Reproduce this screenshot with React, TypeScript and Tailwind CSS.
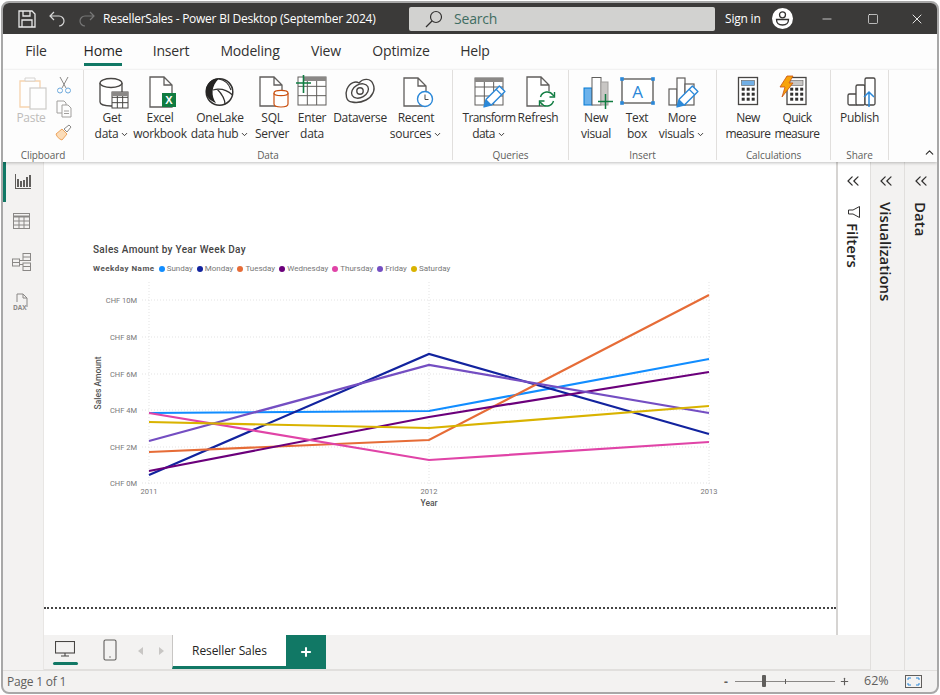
import type { ReactNode } from "react";
import { ChevronDown, ChevronUp, ChevronsLeft, Minus, Square, X, Plus } from "lucide-react";

const Doc = ({ x = 10, y = 1, w = 22, h = 30 }: { x?: number; y?: number; w?: number; h?: number }) => (
  <path d={`M${x} ${y}h${w - 8}l8 8v${h - 8}h-${w}z M${x + w - 8} ${y}v8h8`} fill="#fff" stroke="#605e5c" strokeWidth="1.3" />
);

const Grid = ({ x, y, w, h, cols = 3, rows = 3, stroke = "#605e5c" }: { x: number; y: number; w: number; h: number; cols?: number; rows?: number; stroke?: string }) => (
  <g stroke={stroke} strokeWidth="1" fill="#fff">
    <rect x={x} y={y} width={w} height={h} />
    {Array.from({ length: cols - 1 }).map((_, i) => (
      <path key={i} d={`M${x + ((i + 1) * w) / cols} ${y}v${h}`} />
    ))}
    {Array.from({ length: rows - 1 }).map((_, i) => (
      <path key={i} d={`M${x} ${y + ((i + 1) * h) / rows}h${w}`} />
    ))}
  </g>
);

const Pencil = ({ x, y }: { x: number; y: number }) => (
  <g transform={`translate(${x} ${y}) scale(1.1)`}>
    <path d="M0 19l2-7L14 0l5 5L7 17z" fill="#fff" stroke="#2b88d8" strokeWidth="1.3" strokeLinejoin="round" />
    <path d="M0 19l2-7 5 5z" fill="#2b88d8" />
    <path d="M11 3l5 5" stroke="#2b88d8" strokeWidth="1.1" />
  </g>
);

const Calc = ({ x, display }: { x: number; display: string }) => (
  <g>
    <rect x={x} y="1.5" width="19" height="27" fill="#fff" stroke="#484644" strokeWidth="1.3" />
    <rect x={x + 3} y="4.5" width="13" height="5" fill={display} stroke="#605e5c" strokeWidth="0.6" />
    {[13, 18, 23].map((cy) =>
      [4.5, 9.5, 14.5].map((dx) => <rect key={`${cy}-${dx}`} x={x + dx - 1.3} y={cy - 1.3} width="3" height="3" fill="#323130" />),
    )}
  </g>
);

const icons: Record<string, ReactNode> = {
  getData: (
    <>
      <path d="M10 7v19c0 2.5 5 4 11 4s11-1.500 11-4V7" fill="#fff" stroke="#484644" strokeWidth="1.3" />
      <ellipse cx="21" cy="7" rx="11" ry="4.500" fill="#fff" stroke="#484644" strokeWidth="1.3" />
      <Grid x={22} y={16} w={16} h={16} stroke="#484644" />
      <rect x="22" y="16" width="16" height="4" fill="#8a8886" />
    </>
  ),
  excel: (
    <>
      <Doc x={12} y={1} w={22} h={30} />
      <rect x="24" y="17" width="14" height="14" fill="#107c41" />
      <text x="31" y="28" textAnchor="middle" fontSize="11" fontWeight="700" fill="#fff" fontFamily="Liberation Sans">X</text>
    </>
  ),
  onelake: (
    <>
      <circle cx="21.500" cy="16" r="13.300" fill="#fff" stroke="#323130" strokeWidth="1.500" />
      <path d="M21 2.500C12 2 7 10 8 17c1 5 5 8 10 10-5-7-5-17 3-24.500z" fill="#252423" />
      <path d="M15 14c7-2 14 0 19.500 5M19 13c5 5 8 11 8 15.500M21 3c6 1 10 5 12 11" fill="none" stroke="#323130" strokeWidth="1.200" />
    </>
  ),
  sql: (
    <>
      <Doc x={10} y={1} w={22} h={29} />
      <path d="M24 17v11c0 2 3 3 7 3s7-1 7-3V17" fill="#fff" stroke="#ca5010" strokeWidth="1.2" />
      <ellipse cx="31" cy="17" rx="7" ry="2.700" fill="#fff" stroke="#ca5010" strokeWidth="1.2" />
    </>
  ),
  enter: (
    <>
      <Grid x={8} y={1} w={28} h={28} stroke="#605e5c" />
      <rect x="14" y="1" width="22" height="4" fill="#8a8886" />
      <path d="M6 7h15M13.500 -1v18" stroke="#107c41" strokeWidth="1.600" />
    </>
  ),
  dataverse: (
    <g fill="none" stroke="#484644" strokeWidth="1.400">
      <path d="M14 26C8 26 7 18 9 13c3-7 9-8 12-6 4-5 12-5 14 1 3 6-1 13-7 16-6 3-10 3-14 2z" />
      <ellipse cx="22" cy="15" rx="9" ry="6.500" transform="rotate(-30 22 15)" />
      <circle cx="22" cy="15" r="3.200" />
    </g>
  ),
  recent: (
    <>
      <Doc x={10} y={2} w={22} h={28} />
      <circle cx="31" cy="23" r="7.500" fill="#fff" stroke="#2b88d8" strokeWidth="1.400" />
      <path d="M31 18.500V23.500h3.500" fill="none" stroke="#484644" strokeWidth="1" />
    </>
  ),
  transform: (
    <>
      <Grid x={8} y={2} w={28} h={27} />
      <rect x="8" y="2" width="28" height="4" fill="#8a8886" />
      <Pencil x={17} y={10} />
    </>
  ),
  refresh: (
    <>
      <Doc x={11} y={1} w={22} h={29} />
      <circle cx="31" cy="23" r="8" fill="#fff" />
      <path d="M24.500 21a7 7 0 0 1 12.500-2l0.800 1M37.500 25a7 7 0 0 1-12.500 2l-0.800-1" fill="none" stroke="#107c41" strokeWidth="1.400" />
      <path d="M38.500 16v5h-5M23.500 30v-5h5" fill="none" stroke="#107c41" strokeWidth="1.400" />
    </>
  ),
  newVisual: (
    <>
      <rect x="10" y="12" width="8" height="17" fill="#6cb2eb" stroke="#0078d4" />
      <rect x="18" y="1.500" width="9" height="27.500" fill="#fff" stroke="#605e5c" />
      <rect x="27" y="6" width="7" height="23" fill="#c8c6c4" stroke="#a19f9d" />
      <path d="M24 25.500h15M31.500 18v15" stroke="#107c41" strokeWidth="1.500" />
    </>
  ),
  textbox: (
    <>
      <rect x="7" y="3" width="31" height="24" fill="#fff" stroke="#484644" strokeWidth="1.200" />
      {[
        [7, 3],
        [38, 3],
        [7, 27],
        [38, 27],
      ].map(([cx, cy]) => (
        <rect key={`${cx}-${cy}`} x={cx - 1.800} y={cy - 1.800} width="3.600" height="3.600" fill="#2b88d8" />
      ))}
      <text x="22.500" y="22" textAnchor="middle" fontSize="17" fill="#2b88d8" fontFamily="Open Sans">A</text>
    </>
  ),
  moreVisuals: (
    <>
      <rect x="9" y="13" width="8" height="16" fill="#fff" stroke="#605e5c" strokeWidth="1.200" />
      <rect x="17" y="2" width="8" height="27" fill="#fff" stroke="#605e5c" strokeWidth="1.200" />
      <rect x="25" y="8" width="9" height="21" fill="#fff" stroke="#605e5c" strokeWidth="1.200" />
      <Pencil x={17} y={10} />
    </>
  ),
  newMeasure: <Calc x={12.500} display="#71afe5" />,
  quickMeasure: (
    <>
      <Calc x={12} display="#c8c6c4" />
      <path d="M12 0h6l-4 7h4L7 21l3-10H5z" fill="#f7a30c" stroke="#ca5010" strokeWidth="0.800" />
    </>
  ),
  publish: (
    <g fill="none" stroke="#484644" strokeWidth="1.300">
      <rect x="10" y="18" width="10" height="11" rx="1.500" fill="#fff" />
      <rect x="18" y="9" width="9" height="20" rx="1.500" fill="#fff" />
      <rect x="27" y="2" width="10" height="27" rx="1.500" fill="#fff" />
      <path d="M31 31V16M26 21l5-5 5 5" stroke="#2b88d8" strokeWidth="1.500" />
    </g>
  ),
};

const RibbonItem = ({ icon, lines, caret, width, tight }: { icon: string; lines: string[]; caret?: boolean; width: string; tight?: boolean }) => (
  <div className={`flex shrink-0 flex-col items-center ${width}`}>
    <svg width="44" height="34" viewBox="0 0 44 34" className="overflow-visible">
      {icons[icon]}
    </svg>
    <div className={`flex flex-col items-center whitespace-nowrap text-[12px] leading-[16px] text-[#323130] ${tight ? "tracking-[-0.6px]" : "tracking-[-0.3px]"}`}>
      {lines.map((l, i) => (
        <span key={l} className="flex items-center">
          {l}
          {caret && i === lines.length - 1 && <ChevronDown size={9} strokeWidth={2.500} className="ml-[2px]" />}
        </span>
      ))}
    </div>
  </div>
);

const RibbonGroup = ({ label, width, pad, children }: { label: string; width: string; pad: string; children: ReactNode }) => (
  <div className={`flex h-[90px] shrink-0 flex-col border-r border-[#e1dfdd] ${width}`}>
    <div className={`flex h-[78px] shrink-0 pt-[6px] ${pad}`}>{children}</div>
    <div className="text-center text-[10px] leading-[14px] tracking-[-0.1px] text-[#605e5c]">{label}</div>
  </div>
);

const tabs = [
  { name: "File", width: "w-[44px]" },
  { name: "Home", width: "w-[90px]", active: true },
  { name: "Insert", width: "w-[46px]" },
  { name: "Modeling", width: "w-[112px]" },
  { name: "View", width: "w-[40px]" },
  { name: "Optimize", width: "w-[110px]" },
  { name: "Help", width: "w-[38px]" },
];

const legend = [
  { name: "Sunday", dot: "bg-[#118dff]" },
  { name: "Monday", dot: "bg-[#12239e]" },
  { name: "Tuesday", dot: "bg-[#e66c37]" },
  { name: "Wednesday", dot: "bg-[#6b007b]" },
  { name: "Thursday", dot: "bg-[#e044a7]" },
  { name: "Friday", dot: "bg-[#744ec2]" },
  { name: "Saturday", dot: "bg-[#d9b300]" },
];

const series = [
  { color: "#118dff", y: [413, 411, 359] },
  { color: "#12239e", y: [475, 354, 434] },
  { color: "#e66c37", y: [452, 440, 295] },
  { color: "#6b007b", y: [471, 417, 372] },
  { color: "#e044a7", y: [413, 460, 442] },
  { color: "#744ec2", y: [441, 365, 413] },
  { color: "#d9b300", y: [422, 428, 406] },
];

const yTicks = [
  { label: "CHF 10M", y: 300 },
  { label: "CHF 8M", y: 337 },
  { label: "CHF 6M", y: 374 },
  { label: "CHF 4M", y: 410 },
  { label: "CHF 2M", y: 447 },
  { label: "CHF 0M", y: 483 },
];

const Chart = () => (
  <svg width="640" height="232" viewBox="90 278 640 232" className="block" fontFamily="Roboto, sans-serif">
    {yTicks.map((t) => (
      <g key={t.label}>
        <path d={`M142 ${t.y}H710`} stroke="#e3e3e3" strokeWidth="1" strokeDasharray="1 2" />
        <text x="137" y={t.y + 2.500} textAnchor="end" fontSize="7.500" fill="#777">{t.label}</text>
      </g>
    ))}
    {[149, 429, 709].map((x, i) => (
      <g key={x}>
        <path d={`M${x} 282V484`} stroke="#e3e3e3" strokeWidth="1" strokeDasharray="1 2" />
        <text x={x} y="494" textAnchor="middle" fontSize="7.500" fill="#777">{2011 + i}</text>
      </g>
    ))}
    <text x="0" y="0" transform="translate(101 383) rotate(-90)" textAnchor="middle" fontSize="8.500" fontWeight="500" fill="#555">Sales Amount</text>
    <text x="429" y="506" textAnchor="middle" fontSize="8.500" fontWeight="500" fill="#555">Year</text>
    {series.map((s) => (
      <polyline key={s.color} points={`149,${s.y[0]} 429,${s.y[1]} 709,${s.y[2]}`} fill="none" stroke={s.color} strokeWidth="2.200" />
    ))}
  </svg>
);

const SidePane = ({ label, width, bg, children }: { label: string; width: string; bg: string; children?: ReactNode }) => (
  <div className={`flex shrink-0 flex-col items-center pt-[9px] ${width} ${bg}`}>
    <ChevronsLeft size={20} strokeWidth={1.500} className="text-[#323130]" />
    {children}
    <span className="mt-[11px] text-[15px] font-semibold leading-[18px] text-[#252423] [writing-mode:vertical-rl]">{label}</span>
  </div>
);

export default function App() {
  return (
    <div className="h-[695px] w-[940px] bg-white pl-px pt-px font-['Open_Sans','Noto_Sans',sans-serif]">
      <div className="flex h-[693px] w-[938px] flex-col overflow-hidden rounded-lg border-2 border-[#a8a8a8] bg-[#f3f2f1]">
        {/* title bar */}
        <div className="flex h-[31px] shrink-0 items-center bg-[#3b3a39] text-white">
          <svg width="18" height="18" viewBox="0 0 18 18" fill="none" stroke="#e8e8e8" strokeWidth="1.300" className="ml-[15px]">
            <path d="M1 1h13l3 3v13H1z" />
            <path d="M5 1v5h7V1M4 17v-7h10v7" />
          </svg>
          <svg width="16" height="16" viewBox="0 0 16 16" fill="none" stroke="#d8d8d8" strokeWidth="1.200" className="ml-[13px]">
            <path d="M5 1L1 5l4 4M1 5h9a5 5 0 0 1 0 10" />
          </svg>
          <svg width="16" height="16" viewBox="0 0 16 16" fill="none" stroke="#777" strokeWidth="1.200" className="ml-[14px]">
            <path d="M11 1l4 4-4 4M15 5H6a5 5 0 0 0 0 10" />
          </svg>
          <span className="ml-[8px] w-[306px] whitespace-nowrap text-[12px] tracking-[-0.25px]">ResellerSales - Power BI Desktop (September 2024)</span>
          <div className="flex h-[24px] w-[306px] items-center rounded-[2px] bg-[#d2d2d0] pl-[16px]">
            <svg width="18" height="18" viewBox="0 0 18 18" fill="none" stroke="#323130" strokeWidth="1.200">
              <circle cx="11" cy="7" r="5.500" />
              <path d="M7 11l-6 6" />
            </svg>
            <span className="ml-[11px] text-[14px] tracking-[-0.2px] text-[#3f6d62]">Search</span>
          </div>
          <span className="ml-[10px] w-[37px] whitespace-nowrap text-[12px] tracking-[-0.2px]">Sign in</span>
          <svg width="21" height="21" viewBox="0 0 21 21" className="ml-[10px]">
            <circle cx="10.500" cy="10.500" r="10.500" fill="#fff" />
            <circle cx="10.500" cy="6.800" r="3" fill="none" stroke="#323130" strokeWidth="1.300" />
            <path d="M4.500 11.500h12c0 4-3 5.500-6 5.500s-6-1.500-6-5.500z" fill="none" stroke="#323130" strokeWidth="1.300" />
          </svg>
          <Minus size={14} strokeWidth={1.200} className="ml-[27px]" />
          <Square size={12} strokeWidth={1.300} className="ml-[33px]" />
          <X size={16} strokeWidth={1.300} className="ml-[30px]" />
        </div>

        {/* ribbon tabs */}
        <div className="flex h-[36px] shrink-0 bg-[#fdfdfd] pl-[11px]">
          {tabs.map((t) => (
            <div key={t.name} className={`flex shrink-0 justify-center ${t.width}`}>
              <span className={`h-[32px] pt-[7px] text-[14px] leading-[20px] tracking-[-0.2px] ${t.active ? "border-b-[3px] border-[#117865] font-medium text-[#252423]" : "text-[#323130]"}`}>{t.name}</span>
            </div>
          ))}
        </div>

        {/* ribbon */}
        <div className="relative z-10 flex h-[92px] shrink-0 bg-[#fdfdfd] shadow-[0_1px_3px_rgba(0,0,0,0.25)]">
          <RibbonGroup label="Clipboard" width="w-[81px]" pad="pl-[6px]">
            <div className="flex w-[44px] shrink-0 flex-col items-center opacity-90">
              <svg width="44" height="34" viewBox="0 0 44 34">
                <path d="M11 5h20v26H11z" fill="#fff" stroke="#f6cfa6" strokeWidth="1.300" />
                <path d="M16 5V2h10v3z" fill="#fff" stroke="#d0cecc" strokeWidth="1" />
                <rect x="21" y="12" width="16" height="21" fill="#fff" stroke="#c8c6c4" strokeWidth="1.200" />
              </svg>
              <span className="text-[12px] leading-[16px] tracking-[-0.3px] text-[#b8b6b4]">Paste</span>
            </div>
            <div className="ml-[2px] flex flex-col items-center gap-[6px]">
              <svg width="16" height="18" viewBox="0 0 16 18" fill="none" stroke="#8a8886" strokeWidth="1">
                <path d="M4 1l6 11M12 1L6 12" />
                <circle cx="4" cy="14.500" r="2.500" stroke="#6ca9dc" />
                <circle cx="12" cy="14.500" r="2.500" stroke="#6ca9dc" />
              </svg>
              <svg width="16" height="18" viewBox="0 0 16 18" fill="none" stroke="#a19f9d" strokeWidth="1">
                <path d="M1 1h7l2 2v10H1z" />
                <path d="M6 5h6l3 3v9H6z" fill="#fdfdfd" />
                <path d="M8 11h5M8 13.500h5" />
              </svg>
              <svg width="17" height="17" viewBox="0 0 17 17" fill="none" strokeWidth="1">
                <path d="M1 10l6-5 5 5-5 6c-3-1-5-3-6-6z" fill="#fbdcb8" stroke="#eda35c" />
                <path d="M9 5l5-4 2 2-4 5z" fill="#fff" stroke="#8a8886" />
              </svg>
            </div>
          </RibbonGroup>

          <RibbonGroup label="Data" width="w-[369px]" pad="pl-[4px]">
            <RibbonItem icon="getData" lines={["Get", "data"]} caret width="w-[48px]" />
            <RibbonItem icon="excel" lines={["Excel", "workbook"]} width="w-[48px]" />
            <RibbonItem icon="onelake" lines={["OneLake", "data hub"]} caret width="w-[72px]" />
            <RibbonItem icon="sql" lines={["SQL", "Server"]} width="w-[32px]" />
            <RibbonItem icon="enter" lines={["Enter", "data"]} width="w-[48px]" />
            <RibbonItem icon="dataverse" lines={["Dataverse"]} width="w-[48px]" />
            <RibbonItem icon="recent" lines={["Recent", "sources"]} caret width="w-[64px]" />
          </RibbonGroup>

          <RibbonGroup label="Queries" width="w-[116px]" pad="pl-[8px]">
            <RibbonItem icon="transform" lines={["Transform", "data"]} caret tight width="w-[56px]" />
            <RibbonItem icon="refresh" lines={["Refresh"]} width="w-[42px]" />
          </RibbonGroup>

          <RibbonGroup label="Insert" width="w-[148px]" pad="pl-[7px]">
            <RibbonItem icon="newVisual" lines={["New", "visual"]} width="w-[40px]" />
            <RibbonItem icon="textbox" lines={["Text", "box"]} width="w-[42px]" />
            <RibbonItem icon="moreVisuals" lines={["More", "visuals"]} caret width="w-[48px]" />
          </RibbonGroup>

          <RibbonGroup label="Calculations" width="w-[114px]" pad="pl-[7px]">
            <RibbonItem icon="newMeasure" lines={["New", "measure"]} tight width="w-[48px]" />
            <RibbonItem icon="quickMeasure" lines={["Quick", "measure"]} tight width="w-[50px]" />
          </RibbonGroup>

          <RibbonGroup label="Share" width="w-[58px]" pad="pl-0">
            <RibbonItem icon="publish" lines={["Publish"]} width="w-[57px]" />
          </RibbonGroup>

          <ChevronUp size={13} strokeWidth={2.200} className="mb-[3px] ml-auto mr-[1px] self-end text-[#323130]" />
        </div>

        {/* body */}
        <div className="flex min-h-0 flex-1">
          {/* view switcher */}
          <div className="flex w-[41px] shrink-0 flex-col border-r border-[#e8e6e4]">
            <div className="flex h-[40px] items-center justify-center border-l-[3px] border-[#117865] pb-[2px] pr-[3px]">
              <svg width="16" height="15" viewBox="0 0 16 15" fill="#605e5c">
                <path d="M0 0h1v14h15v1H0z" />
                <path d="M2 5h2v8H2zM5 7h2v6H5zM8 6h2v7H8zM11 3h2v10h-2zM14 1h2v12h-2z" />
              </svg>
            </div>
            <div className="flex h-[40px] items-center justify-center pb-[2px] pr-[3px]">
              <svg width="17" height="16" viewBox="0 0 17 16" fill="none" stroke="#8a8886" strokeWidth="1">
                <rect x="0.500" y="0.500" width="16" height="15" />
                <path d="M0.500 3.500h16" strokeWidth="2" />
                <path d="M0.500 8h16M0.500 12h16M6 3v12M11 3v12" />
              </svg>
            </div>
            <div className="flex h-[41px] items-center justify-center pb-[2px] pr-[3px]">
              <svg width="19" height="18" viewBox="0 0 19 18" fill="none" stroke="#8a8886" strokeWidth="1">
                <rect x="0.500" y="6" width="7" height="7" />
                <rect x="11" y="0.500" width="7.500" height="7" />
                <rect x="11" y="10" width="7.500" height="7.500" />
                <path d="M7.500 7.500H11M7.500 11.500H11M0.500 9.500h7M11 4h7.500M11 13.500h7.500" />
              </svg>
            </div>
            <div className="flex h-[40px] items-center justify-center pb-[2px] pr-[3px]">
              <svg width="18" height="18" viewBox="0 0 18 18" fill="none" stroke="#8a8886" strokeWidth="1">
                <path d="M4 9V1h6l4 4v9" />
                <path d="M10 1v4h4" />
                <text x="0" y="16.500" fontSize="6.500" fontWeight="700" stroke="none" fill="#8a8886" fontFamily="Open Sans">DAX</text>
              </svg>
            </div>
          </div>

          <div className="flex min-w-0 flex-1 flex-col">
            <div className="flex min-h-0 flex-1">
              {/* report canvas */}
              <div className="flex flex-1 flex-col bg-white">
                <div className="flex-1 pl-[49px] pt-[82px] font-['Roboto',sans-serif]">
                  <div className="text-[10px] font-medium leading-[12px] tracking-[0.3px] text-[#444]">Sales Amount by Year Week Day</div>
                  <div className="mt-[7px] flex h-[12px] items-center text-[8px] text-[#777]">
                    <span className="mr-[4px] font-bold tracking-[0.5px] text-[#555]">Weekday Name</span>
                    {legend.map((l) => (
                      <span key={l.name} className="mr-[4px] flex items-center">
                        <span className={`mr-[2px] h-[6px] w-[6px] rounded-full ${l.dot}`} />
                        {l.name}
                      </span>
                    ))}
                  </div>
                  <div className="ml-[-3px] mt-[3px]">
                    <Chart />
                  </div>
                </div>
                <div className="mb-[26px] border-b-2 border-dotted border-[#444]" />
              </div>
              {/* filters */}
              <SidePane label="Filters" width="w-[34px] border-l-2 border-[#d6d4d2] pr-[3px]" bg="bg-white">
                <svg width="12" height="12" viewBox="0 0 12 12" fill="none" stroke="#323130" strokeWidth="1" className="mb-[-6px] ml-[3px] mt-[15px]">
                  <path d="M11.500 0.500v11L5 8H0.500V4H5z" />
                </svg>
              </SidePane>
            </div>

            {/* page tabs */}
            <div className="flex h-[35px] shrink-0 items-stretch border-b border-[#e1dfdd] bg-[#f3f2f1]">
              <div className="flex w-[44px] shrink-0 flex-col items-center pr-[2px] pt-[6px]">
                <svg width="20" height="16" viewBox="0 0 20 16" fill="none" stroke="#484644" strokeWidth="1.100">
                  <rect x="0.500" y="0.500" width="19" height="11.500" />
                  <path d="M10 12v3M6 15h8" />
                </svg>
                <div className="mt-[5px] h-[3px] w-[25px] rounded-sm bg-[#117865]" />
              </div>
              <div className="ml-[4px] flex w-[36px] shrink-0 justify-center pt-[4px]">
                <svg width="14" height="22" viewBox="0 0 14 22" fill="none" stroke="#605e5c" strokeWidth="1.100">
                  <rect x="1" y="1" width="12" height="20" rx="1.500" />
                  <path d="M6.500 18h1" strokeWidth="1.300" />
                </svg>
              </div>
              <div className="ml-[6px] flex w-[34px] shrink-0 items-center justify-between px-[4px] pb-[2px]">
                <span className="h-0 w-0 border-y-[4px] border-r-[5px] border-y-transparent border-r-[#c8c6c4]" />
                <span className="h-0 w-0 border-y-[4px] border-l-[5px] border-y-transparent border-l-[#c8c6c4]" />
              </div>
              <div className="ml-[4px] flex w-[114px] shrink-0 items-center justify-center border-b-[3px] border-l border-[#117865] border-l-[#c8c6c4] bg-white text-[12px] font-medium tracking-[-0.1px] text-[#252423]">Reseller Sales</div>
              <div className="flex w-[40px] shrink-0 items-center justify-center bg-[#117865] text-white">
                <Plus size={14} strokeWidth={3.500} />
              </div>
            </div>
          </div>

          <SidePane label="Visualizations" width="w-[34px] border-l border-[#e1dfdd] pr-[3px]" bg="bg-[#f3f2f1]" />
          <SidePane label="Data" width="w-[33px] border-l border-[#e1dfdd]" bg="bg-[#f3f2f1]" />
        </div>

        {/* status bar */}
        <div className="flex h-[22px] shrink-0 items-center border-t border-[#e1dfdd] pl-[4px] text-[12px] text-[#605e5c]">
          <span className="w-[717px] tracking-[-0.2px]">Page 1 of 1</span>
          <span className="w-[11px] font-bold">-</span>
          <div className="flex h-[12px] w-[100px] items-center">
            <div className="relative h-px w-full bg-[#8a8886]">
              <div className="absolute left-[27px] top-[-6px] h-[12px] w-[4px] rounded-[1px] bg-[#605e5c]" />
              <div className="absolute left-[50px] top-[-2px] h-[5px] w-px bg-[#605e5c]" />
            </div>
          </div>
          <Plus size={11} strokeWidth={2.500} className="ml-[4px] text-[#605e5c]" />
          <span className="ml-[14px] w-[24px] text-[12.500px]">62%</span>
          <svg width="17" height="13" viewBox="0 0 17 13" fill="none" stroke="#605e5c" strokeWidth="1" className="ml-[17px]">
            <rect x="0.500" y="0.500" width="16" height="12" />
            <path d="M3 5V3h3M11 3h3v2M14 8v2h-3M6 10H3V8" stroke="#2b88d8" />
          </svg>
        </div>
      </div>
    </div>
  );
}
